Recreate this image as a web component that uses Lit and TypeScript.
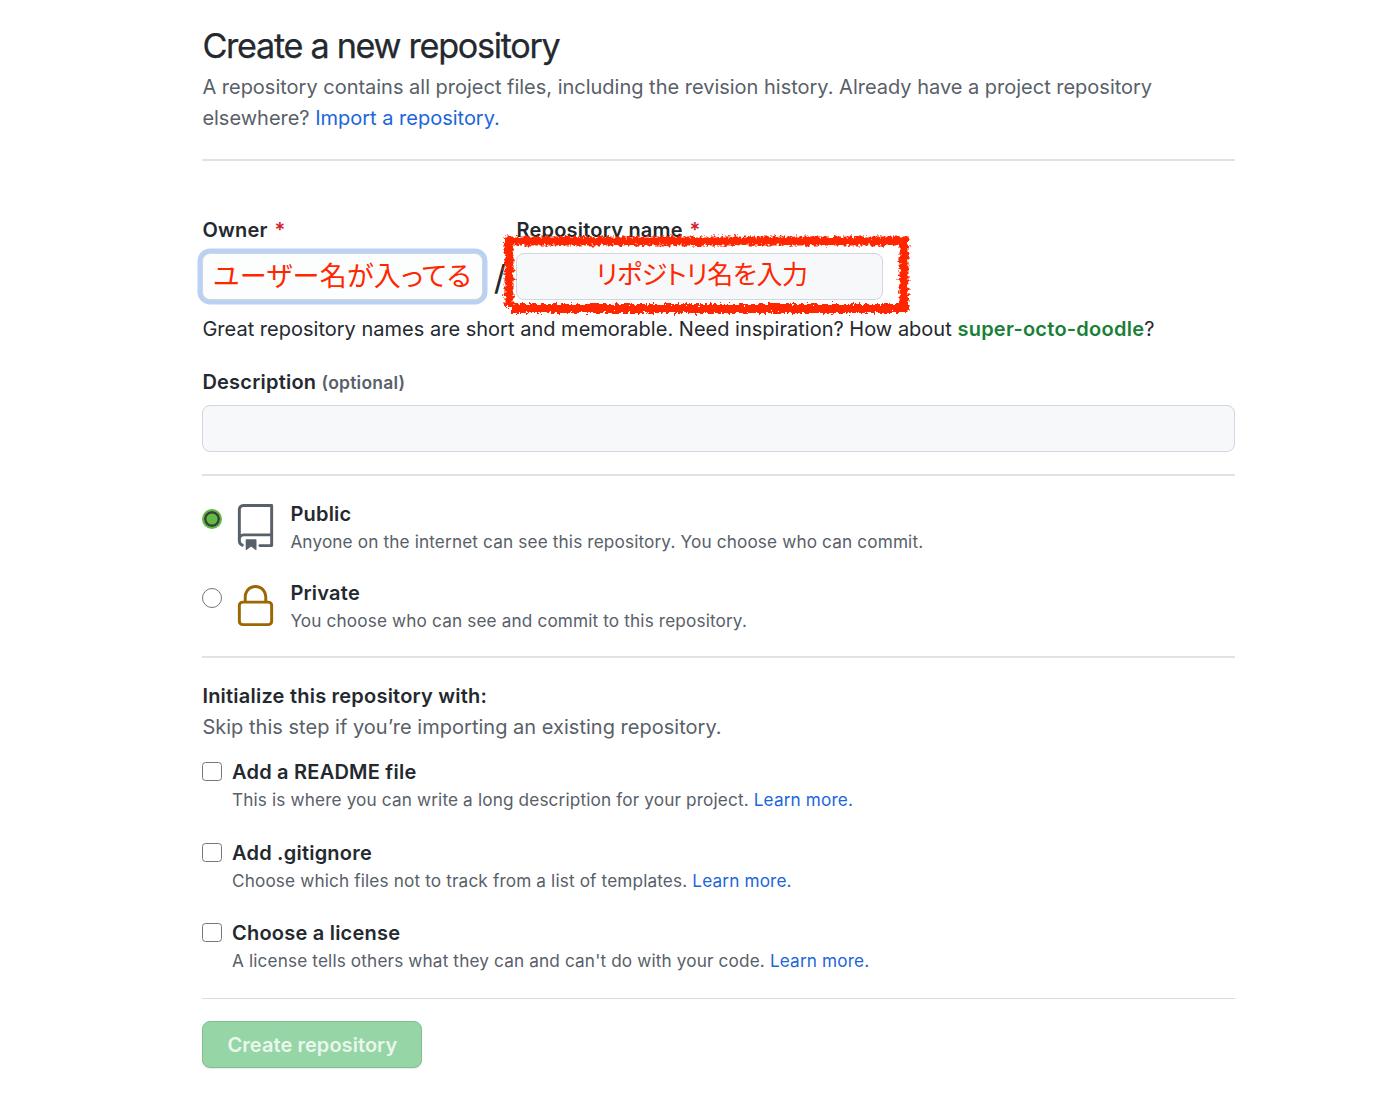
import { LitElement, css, html, svg } from "lit";
import { customElement, state } from "lit/decorators.js";

const repoIcon = svg`
	<path fill-rule="evenodd" d="M3 2.75A2.75 2.75 0 015.75 0h14.5a.75.75 0 01.75.75v20.5a.75.75 0 01-.75.75h-6a.75.75 0 010-1.5h5.25v-4H6A1.5 1.5 0 004.5 18v.75c0 .716.43 1.334 1.05 1.605a.75.75 0 01-.6 1.374A3.25 3.25 0 013 18.75v-16zM19.5 1.5V15H6c-.546 0-1.059.146-1.5.401V2.75c0-.69.56-1.25 1.25-1.25H19.5z"></path>
	<path d="M7 18.25a.25.25 0 01.25-.25h5a.25.25 0 01.25.25v5.01a.25.25 0 01-.397.201l-2.206-1.604a.25.25 0 00-.294 0L7.397 23.46a.25.25 0 01-.397-.2v-5.01z"></path>
`;

const lockIcon = svg`
	<path fill-rule="evenodd" d="M6 9V7.25C6 3.845 8.503 1 12 1s6 2.845 6 6.25V9h.5a2.5 2.5 0 012.5 2.5v8a2.5 2.5 0 01-2.5 2.5h-13A2.5 2.5 0 013 19.5v-8A2.5 2.5 0 015.5 9H6zm1.5-1.75C7.5 4.58 9.422 2.5 12 2.5c2.578 0 4.5 2.08 4.5 4.75V9h-9V7.25zm-3 4.25a1 1 0 011-1h13a1 1 0 011 1v8a1 1 0 01-1 1h-13a1 1 0 01-1-1v-8z"></path>
`;

const visibilities = [
	{ id: "public", name: "Public", icon: repoIcon, note: "Anyone on the internet can see this repository. You choose who can commit." },
	{ id: "private", name: "Private", icon: lockIcon, note: "You choose who can see and commit to this repository." },
];

const extras = [
	{ name: "Add a README file", note: "This is where you can write a long description for your project." },
	{ name: "Add .gitignore", note: "Choose which files not to track from a list of templates." },
	{ name: "Choose a license", note: "A license tells others what they can and can't do with your code." },
];

@customElement("app-root")
export class AppRoot extends LitElement {
	static styles = css`
		:host {
			display: block;
			box-sizing: border-box;
			height: 1102px;
			padding: 24px 165px 0 202.4px;
			overflow: hidden;
			background: #fff;
			color: #24292f;
			font-family: Inter, "Noto Sans CJK JP", sans-serif;
			font-size: 20px;
			line-height: 31px;
			white-space: nowrap;
		}

		h1 {
			margin: 0;
			font-size: 34.2px;
			font-weight: 400;
			line-height: 44px;
			letter-spacing: -1.3px;
			-webkit-text-stroke: 0.25px currentColor;
		}

		p {
			margin: 0;
		}

		a {
			color: #1b66dc;
			text-decoration: none;
		}

		hr {
			height: 2px;
			margin: 0;
			border: none;
			background: #dfe3e8;
		}

		input {
			display: block;
			box-sizing: border-box;
			margin: 0;
		}

		.lead {
			margin: 4px 0 25px;
			color: #586069;
			letter-spacing: -0.01px;
		}

		.label,
		.name {
			font-weight: 600;
			letter-spacing: 0.22px;
		}

		.required {
			margin-left: 1.5px;
			color: #cf222e;
		}

		.optional {
			color: #586069;
			font-size: 17.5px;
		}

		.names {
			display: flex;
			margin-top: 54px;
		}

		.owner {
			width: 281px;
		}

		.repo {
			position: relative;
			width: 367px;
		}

		.box,
		.description {
			display: flex;
			justify-content: center;
			box-sizing: border-box;
			height: 47px;
			margin-top: 7px;
			border: 1.5px solid #d0d7de;
			border-radius: 8px;
			background: #f6f8fa;
		}

		.box {
			color: #ff2600;
			font-family: "Noto Sans CJK JP", sans-serif;
			font-size: 26px;
			line-height: 38px;
			font-feature-settings: "palt";
			letter-spacing: -0.4px;
			text-indent: 4px;
		}

		.box.focused {
			border-color: #d3d6d6;
			background: #fcfdfd;
			box-shadow: 0 0 0 4.5px #b9d1f5;
			font-size: 27px;
			line-height: 41px;
			letter-spacing: 0.4px;
			text-indent: -1px;
		}

		.slash {
			width: 33px;
			padding-top: 47px;
			font-size: 34px;
			line-height: 32px;
			text-align: center;
		}

		.frame {
			position: absolute;
			top: 15px;
			left: -18px;
			width: 420px;
			height: 88px;
		}

		.hint {
			margin-top: 14px;
			letter-spacing: 0.01px;
		}

		.hint b {
			color: #1a7f37;
			font-weight: 600;
			letter-spacing: 0.25px;
		}

		.about {
			margin: 22px 0;
		}

		.description {
			width: 100%;
			margin-top: 7px;
		}

		.choices {
			padding-top: 24px;
		}

		.choice {
			display: flex;
			height: 79px;
		}

		.choice:last-child {
			height: 77px;
		}

		.radio {
			width: 20px;
			height: 20px;
			margin-top: 9px;
			appearance: none;
			border: 1.5px solid #767676;
			border-radius: 50%;
			background: #fff;
		}

		.radio:checked {
			border: 2px solid #5fb944;
			background: #62ba46;
			box-shadow: inset 0 0 0 2.4px #3a3f3a;
		}

		.icon {
			width: 47px;
			height: 47px;
			margin: 3.5px 11.4px 0 9.6px;
			fill: #586069;
		}

		.icon.private {
			fill: #9a6700;
		}

		.name {
			line-height: 28px;
		}

		.note {
			color: #586069;
			font-size: 17.2px;
			line-height: 27px;
			letter-spacing: 0.14px;
		}

		.initialize {
			margin-top: 22.5px;
		}

		.skip {
			margin-bottom: 15.5px;
			color: #586069;
			letter-spacing: 0.02px;
		}

		.extra {
			display: flex;
			gap: 9.6px;
			height: 80.6px;
		}

		.check {
			width: 20px;
			height: 19px;
			margin-top: 4px;
			appearance: none;
			border: 1.5px solid #767676;
			border-radius: 3.5px;
			background: #fff;
		}

		.end {
			height: 1px;
			margin-top: -1.8px;
			background: #d6dbe2;
		}

		.submit {
			display: block;
			box-sizing: border-box;
			width: 220px;
			height: 47px;
			margin-top: 22px;
			padding: 1px 0 0;
			border: 1.5px solid #82bd90;
			border-radius: 8px;
			background: #96d5a5;
			box-shadow: 0 1px 1px #1b1f2418;
			color: #eaf7ed;
			font: 600 20px/44px Inter, sans-serif;
			letter-spacing: 0.06px;
		}
	`;

	@state() private visibility = "public";

	private renderFrame() {
		return html`
			<svg class="frame" viewBox="0 0 420 88">
				<filter id="crayon" x="0" y="0" width="420" height="88" filterUnits="userSpaceOnUse">
					<feTurbulence type="fractalNoise" baseFrequency="0.33" numOctaves="2" seed="7" />
					<feDisplacementMap in="SourceGraphic" scale="8" xChannelSelector="R" yChannelSelector="G" />
					<feGaussianBlur stdDeviation="0.5" />
				</filter>
				<path d="M6 11H410M406 6.5V82M410 78.5H13M11 6.5V77" fill="none" stroke="#ff2600" stroke-width="9" filter="url(#crayon)" />
			</svg>
		`;
	}

	render() {
		return html`
			<h1>Create a new repository</h1>
			<p class="lead">
				A repository contains all project files, including the revision history. Already have a project repository<br />
				elsewhere? <a>Import a repository.</a>
			</p>
			<hr />
			<div class="names">
				<div class="owner">
					<div class="label">Owner <span class="required">*</span></div>
					<div class="box focused">ユーザー名が入ってる</div>
				</div>
				<div class="slash">/</div>
				<div class="repo">
					<div class="label">Repository name <span class="required">*</span></div>
					<div class="box">リポジトリ名を入力</div>
					${this.renderFrame()}
				</div>
			</div>
			<p class="hint">Great repository names are short and memorable. Need inspiration? How about <b>super-octo-doodle</b>?</p>
			<div class="about">
				<div class="label">Description <span class="optional">(optional)</span></div>
				<input class="description" type="text" />
			</div>
			<hr />
			<div class="choices">
				${visibilities.map((v) => html`
					<div class="choice">
						<input class="radio" type="radio" name="visibility" .checked=${this.visibility === v.id} @change=${() => (this.visibility = v.id)} />
						<svg class="icon ${v.id}" viewBox="0 0 24 24">${v.icon}</svg>
						<div>
							<div class="name">${v.name}</div>
							<div class="note">${v.note}</div>
						</div>
					</div>
				`)}
			</div>
			<hr />
			<div class="label initialize">Initialize this repository with:</div>
			<p class="skip">Skip this step if you’re importing an existing repository.</p>
			${extras.map((extra) => html`
				<div class="extra">
					<input class="check" type="checkbox" />
					<div>
						<div class="name">${extra.name}</div>
						<div class="note">${extra.note} <a>Learn more.</a></div>
					</div>
				</div>
			`)}
			<hr class="end" />
			<button type="button" class="submit">Create repository</button>
		`;
	}
}
